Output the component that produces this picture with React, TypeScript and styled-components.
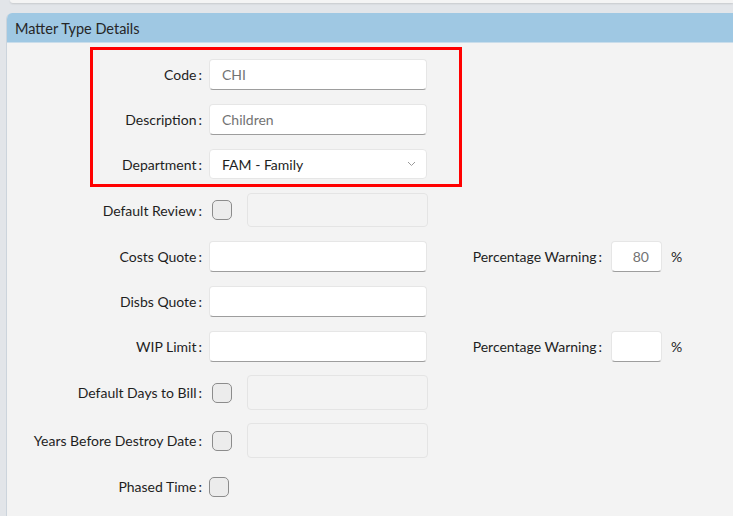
import styled, { createGlobalStyle } from 'styled-components'

const GlobalStyle = createGlobalStyle`
  html, body {
    margin: 0;
    padding: 0;
    background: #e2e5e9;
    font-family: Lato, 'Noto Sans', sans-serif;
    font-size: 14px;
    color: #1e1e1e;
  }
`

const Page = styled.div`
  width: 733px;
  height: 516px;
  overflow: hidden;
  background: #e2e5e9;
  display: flex;
  flex-direction: column;
`

const TopCard = styled.div`
  height: 3px;
  margin-left: 10px;
  background: #f4f4f4;
  border-bottom-left-radius: 4px;
  box-shadow: 0 1px 2px rgba(0, 0, 0, 0.12);
  margin-bottom: 10px;
`

const Panel = styled.section`
  flex: 1;
  margin-left: 6px;
  border-left: 1px solid #ccd4dc;
  border-top-left-radius: 6px;
  background: #f3f3f3;
  overflow: hidden;
`

const PanelHeader = styled.header`
  height: 30px;
  display: flex;
  align-items: center;
  padding: 1px 0 0 8px;
  box-sizing: border-box;
  background: #9fc8e3;
  border-bottom: 1px solid #c9ddeb;
  color: #262626;
  font-size: 14.5px;
`

const Body = styled.div`
  padding-top: 16px;
  display: flex;
  flex-direction: column;
  gap: 14px;
`

const Highlight = styled.div`
  position: relative;
  display: flex;
  flex-direction: column;
  gap: 14px;

  &::before {
    content: '';
    position: absolute;
    left: 83px;
    top: -12px;
    width: 366px;
    height: 134px;
    border: 3px solid #ff0000;
    pointer-events: none;
  }
`

const Row = styled.div<{ $h?: number; $tight?: boolean }>`
  display: flex;
  align-items: center;
  height: ${(p) => p.$h ?? 31}px;
  margin-top: ${(p) => (p.$tight ? -1 : 0)}px;
`

const Label = styled.label<{ $w?: number; $gap?: number }>`
  width: ${(p) => p.$w ?? 195}px;
  flex: none;
  text-align: right;
  white-space: nowrap;
  color: #1e1e1e;
  margin-right: ${(p) => p.$gap ?? 7}px;

  &::after {
    content: ':';
    margin-left: 2px;
  }
`

const Input = styled.div<{ $w?: number; $muted?: boolean; $right?: boolean }>`
  box-sizing: border-box;
  width: ${(p) => p.$w ?? 218}px;
  height: 31px;
  flex: none;
  display: flex;
  align-items: center;
  justify-content: ${(p) => (p.$right ? 'flex-end' : 'space-between')};
  padding: 0 12px;
  background: #ffffff;
  border: 1px solid #e6e6e6;
  border-bottom-color: #9d9d9d;
  border-radius: 4px;
  color: ${(p) => (p.$muted ? '#737373' : '#1e1e1e')};
`

const Select = styled(Input)`
  height: 30px;
  border-bottom-color: #e6e6e6;
  padding-right: 10px;
`

const Check = styled.span<{ $ml?: number }>`
  box-sizing: border-box;
  width: 20px;
  height: 20px;
  flex: none;
  margin-left: ${(p) => p.$ml ?? 3}px;
  border: 1px solid #8c8c8c;
  border-radius: 5px;
  background: #ececec;
`

const DisabledBox = styled.div`
  box-sizing: border-box;
  width: 181px;
  height: 100%;
  margin-left: 15px;
  border: 1px solid #e4e4e4;
  border-radius: 4px;
  background: #f3f3f3;
`

const Side = styled.div`
  display: flex;
  align-items: center;
`

const Unit = styled.span`
  margin-left: 9px;
  color: #1e1e1e;
`

function Chevron() {
  return (
    <svg width="9" height="6" viewBox="0 0 9 6" fill="none">
      <path d="M1 1l3.5 3.5L8 1" stroke="#9a9a9a" strokeWidth="1" />
    </svg>
  )
}

function PercentWarning({ value }: { value?: string }) {
  return (
    <Side>
      <Label $w={175} $gap={9}>
        Percentage Warning
      </Label>
      <Input $w={51} $muted $right>
        {value}
      </Input>
      <Unit>%</Unit>
    </Side>
  )
}

export default function App() {
  return (
    <Page>
      <GlobalStyle />
      <TopCard />
      <Panel>
        <PanelHeader>Matter Type Details</PanelHeader>
        <Body>
          <Highlight>
            <Row>
              <Label>Code</Label>
              <Input $muted>CHI</Input>
            </Row>
            <Row>
              <Label>Description</Label>
              <Input $muted>Children</Input>
            </Row>
            <Row $h={30}>
              <Label>Department</Label>
              <Select>
                FAM - Family
                <Chevron />
              </Select>
            </Row>
          </Highlight>
          <Row $h={34}>
            <Label>Default Review</Label>
            <Check />
            <DisabledBox />
          </Row>
          <Row>
            <Label>Costs Quote</Label>
            <Input />
            <PercentWarning value="80" />
          </Row>
          <Row>
            <Label>Disbs Quote</Label>
            <Input />
          </Row>
          <Row>
            <Label>WIP Limit</Label>
            <Input />
            <PercentWarning />
          </Row>
          <Row $h={35} $tight>
            <Label>Default Days to Bill</Label>
            <Check />
            <DisabledBox />
          </Row>
          <Row $h={35} $tight>
            <Label>Years Before Destroy Date</Label>
            <Check />
            <DisabledBox />
          </Row>
          <Row $tight>
            <Label>Phased Time</Label>
            <Check $ml={0} />
          </Row>
        </Body>
      </Panel>
    </Page>
  )
}
